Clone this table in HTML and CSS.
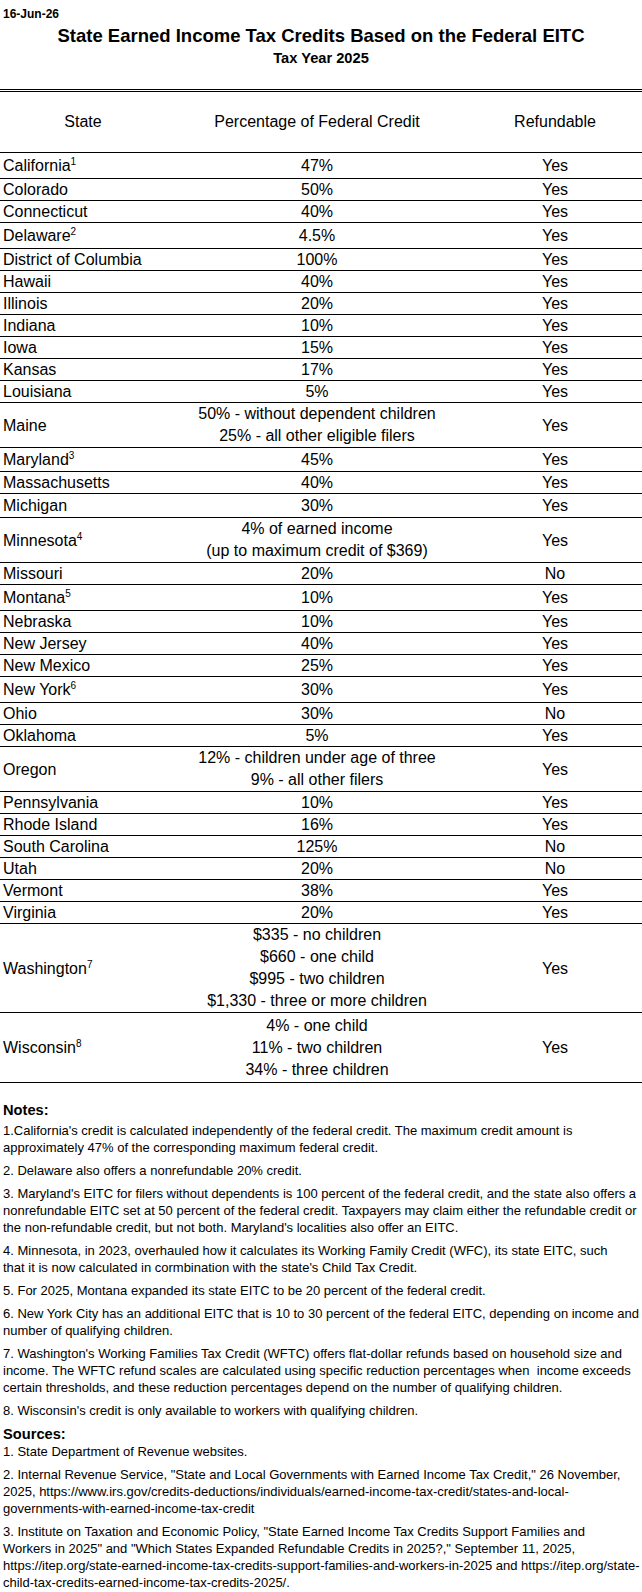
FILE: index.html
```html
<!DOCTYPE html>
<html lang="en">
<head>
    <meta charset="UTF-8">
    <meta name="viewport" content="width=device-width, initial-scale=1.0">
    <title>State Earned Income Tax Credits Based on the Federal EITC</title>
    <link rel="stylesheet" href="styles.css">
</head>
<body>
    <div class="date">16-Jun-26</div>
    <h1 class="title">State Earned Income Tax Credits Based on the Federal EITC</h1>
    <div class="subtitle">Tax Year 2025</div>

    <table class="eitc">
        <thead>
            <tr>
                <th class="col-state">State</th>
                <th class="col-pct">Percentage of Federal Credit</th>
                <th class="col-ref">Refundable</th>
            </tr>
        </thead>
        <tbody>
            <tr class="noted"><td class="state">California<sup>1</sup></td><td>47%</td><td>Yes</td></tr>
            <tr><td class="state">Colorado</td><td>50%</td><td>Yes</td></tr>
            <tr><td class="state">Connecticut</td><td>40%</td><td>Yes</td></tr>
            <tr class="noted"><td class="state">Delaware<sup>2</sup></td><td>4.5%</td><td>Yes</td></tr>
            <tr><td class="state">District of Columbia</td><td>100%</td><td>Yes</td></tr>
            <tr><td class="state">Hawaii</td><td>40%</td><td>Yes</td></tr>
            <tr><td class="state">Illinois</td><td>20%</td><td>Yes</td></tr>
            <tr><td class="state">Indiana</td><td>10%</td><td>Yes</td></tr>
            <tr><td class="state">Iowa</td><td>15%</td><td>Yes</td></tr>
            <tr><td class="state">Kansas</td><td>17%</td><td>Yes</td></tr>
            <tr><td class="state">Louisiana</td><td>5%</td><td>Yes</td></tr>
            <tr>
                <td class="state">Maine</td>
                <td><div class="line">50% - without dependent children</div><div class="line">25% - all other eligible filers</div></td>
                <td>Yes</td>
            </tr>
            <tr class="noted-sm"><td class="state">Maryland<sup>3</sup></td><td>45%</td><td>Yes</td></tr>
            <tr><td class="state">Massachusetts</td><td>40%</td><td>Yes</td></tr>
            <tr class="noted-sm"><td class="state">Michigan</td><td>30%</td><td>Yes</td></tr>
            <tr>
                <td class="state">Minnesota<sup>4</sup></td>
                <td><div class="line">4% of earned income</div><div class="line">(up to maximum credit of $369)</div></td>
                <td>Yes</td>
            </tr>
            <tr><td class="state">Missouri</td><td>20%</td><td>No</td></tr>
            <tr class="noted"><td class="state">Montana<sup>5</sup></td><td>10%</td><td>Yes</td></tr>
            <tr><td class="state">Nebraska</td><td>10%</td><td>Yes</td></tr>
            <tr><td class="state">New Jersey</td><td>40%</td><td>Yes</td></tr>
            <tr><td class="state">New Mexico</td><td>25%</td><td>Yes</td></tr>
            <tr class="noted"><td class="state">New York<sup>6</sup></td><td>30%</td><td>Yes</td></tr>
            <tr><td class="state">Ohio</td><td>30%</td><td>No</td></tr>
            <tr><td class="state">Oklahoma</td><td>5%</td><td>Yes</td></tr>
            <tr>
                <td class="state">Oregon</td>
                <td><div class="line">12% - children under age of three</div><div class="line">9% - all other filers</div></td>
                <td>Yes</td>
            </tr>
            <tr><td class="state">Pennsylvania</td><td>10%</td><td>Yes</td></tr>
            <tr><td class="state">Rhode Island</td><td>16%</td><td>Yes</td></tr>
            <tr><td class="state">South Carolina</td><td>125%</td><td>No</td></tr>
            <tr><td class="state">Utah</td><td>20%</td><td>No</td></tr>
            <tr><td class="state">Vermont</td><td>38%</td><td>Yes</td></tr>
            <tr><td class="state">Virginia</td><td>20%</td><td>Yes</td></tr>
            <tr>
                <td class="state">Washington<sup>7</sup></td>
                <td>
                    <div class="line">$335 - no children</div>
                    <div class="line">$660 - one child</div>
                    <div class="line">$995 - two children</div>
                    <div class="line">$1,330 - three or more children</div>
                </td>
                <td>Yes</td>
            </tr>
            <tr class="wide">
                <td class="state">Wisconsin<sup>8</sup></td>
                <td>
                    <div class="line">4% - one child</div>
                    <div class="line">11% - two children</div>
                    <div class="line">34% - three children</div>
                </td>
                <td>Yes</td>
            </tr>
        </tbody>
    </table>

    <div class="notes">
        <h2>Notes:</h2>
        <p>1.California's credit is calculated independently of the federal credit. The maximum credit amount is approximately 47% of the corresponding maximum federal credit.</p>
        <p>2. Delaware also offers a nonrefundable 20% credit.</p>
        <p>3. Maryland's EITC for filers without dependents is 100 percent of the federal credit, and the state also offers a nonrefundable EITC set at 50 percent of the federal credit. Taxpayers may claim either the refundable credit or the non-refundable credit, but not both. Maryland's localities also offer an EITC.</p>
        <p>4. Minnesota, in 2023, overhauled how it calculates its Working Family Credit (WFC), its state EITC, such<br>that it is now calculated in cormbination with the state's Child Tax Credit.</p>
        <p>5. For 2025, Montana expanded its state EITC to be 20 percent of the federal credit.</p>
        <p>6. New York City has an additional EITC that is 10 to 30 percent of the federal EITC, depending on income and number of qualifying children.</p>
        <p>7. Washington's Working Families Tax Credit (WFTC) offers flat-dollar refunds based on household size and income. The WFTC refund scales are calculated using specific reduction percentages when&nbsp; income exceeds certain thresholds, and these reduction percentages depend on the number of qualifying children.</p>
        <p>8. Wisconsin's credit is only available to workers with qualifying children.</p>

        <h2 class="sources">Sources:</h2>
        <p>1. State Department of Revenue websites.</p>
        <p>2. Internal Revenue Service, "State and Local Governments with Earned Income Tax Credit," 26 November, 2025, https://www.irs.gov/credits-deductions/individuals/earned-income-tax-credit/states-and-local-governments-with-earned-income-tax-credit</p>
        <p>3. Institute on Taxation and Economic Policy, "State Earned Income Tax Credits Support Families and<br>Workers in 2025" and "Which States Expanded Refundable Credits in 2025?," September 11, 2025, https://itep.org/state-earned-income-tax-credits-support-families-and-workers-in-2025 and https://itep.org/state-child-tax-credits-earned-income-tax-credits-2025/.</p>
    </div>
</body>
</html>
```

FILE: styles.css
```css
body {
    margin: 0;
    font-family: "Liberation Sans", Arial, sans-serif;
    color: #000;
    background-color: #fff;
}
.date {
    padding: 7px 3px 0;
    font-size: 12px;
    line-height: 14px;
    font-weight: bold;
}
.title {
    margin: 4px 0 0;
    font-size: 18.5px;
    line-height: 21px;
    text-align: center;
}
.subtitle {
    margin-top: 4px;
    font-size: 14.67px;
    line-height: 17px;
    font-weight: bold;
    text-align: center;
}
.eitc {
    width: 642px;
    margin-top: 22px;
    border-collapse: collapse;
    border-top: 3px double #000;
    font-size: 16px;
}
.eitc th {
    height: 60px;
    padding: 0;
    font-weight: normal;
    text-align: center;
    border-bottom: 1px solid #000;
}
.col-state { width: 166px; }
.col-pct { width: 302px; }
.col-ref { width: 174px; }
.eitc td {
    height: 21px;
    padding: 0;
    line-height: 21px;
    text-align: center;
    vertical-align: middle;
    border-bottom: 1px solid #000;
}
.eitc td.state {
    text-align: left;
    padding-left: 3px;
}
.eitc tr.noted td { height: 25px; }
.eitc tr.noted-sm td { height: 23px; }
.eitc tr.wide td { height: 69px; }
.eitc .line {
    line-height: 22px;
}
.eitc sup {
    font-size: 10px;
    line-height: 0;
    vertical-align: 6px;
}
.notes {
    padding: 0 0 0 3px;
    font-size: 13px;
    line-height: 17px;
}
.notes h2 {
    margin: 18px 0 3px;
    font-size: 14.67px;
    line-height: 18px;
}
.notes h2.sources {
    margin: 0;
}
.notes p {
    margin: 0 0 6px;
}
```
